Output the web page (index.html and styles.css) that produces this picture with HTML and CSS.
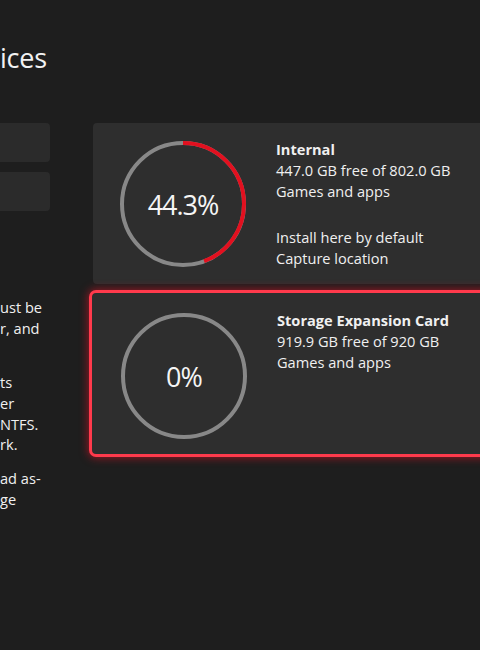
FILE: index.html
```html
<!DOCTYPE html>
<html lang="en">
<head>
<meta charset="utf-8">
<title>Storage devices</title>
<link rel="stylesheet" href="styles.css">
</head>
<body>
<div class="page">
  <h1 class="title">ices</h1>
  <div class="content">
    <aside class="sidebar">
      <div class="side-btn"></div>
      <div class="side-btn"></div>
      <div class="notes">
        <p>ust be<br>r, and<br>&nbsp;</p>
        <p>ts<br>er<br>NTFS.<br>rk.</p>
        <p>ad as-<br>ge</p>
      </div>
    </aside>
    <section class="devices">
      <div class="card">
        <div class="gauge">
          <svg class="ring" viewBox="0 0 126 126" width="126" height="126">
            <circle cx="63" cy="63" r="61" class="track"/>
            <circle cx="63" cy="63" r="61" class="fill" style="stroke-dasharray: 169.8 383.3"/>
          </svg>
          <span class="pct">44.3%</span>
        </div>
        <div class="info">
          <div class="name">Internal</div>
          <div>447.0 GB free of 802.0 GB</div>
          <div>Games and apps</div>
          <div class="extra">
            <div>Install here by default</div>
            <div>Capture location</div>
          </div>
        </div>
      </div>
      <div class="card focused">
        <div class="gauge">
          <svg class="ring" viewBox="0 0 126 126" width="126" height="126">
            <circle cx="63" cy="63" r="61" class="track"/>
          </svg>
          <span class="pct">0%</span>
        </div>
        <div class="info">
          <div class="name">Storage Expansion Card</div>
          <div>919.9 GB free of 920 GB</div>
          <div>Games and apps</div>
        </div>
      </div>
    </section>
  </div>
</div>
</body>
</html>
```

FILE: styles.css
```css
html, body {
  margin: 0;
  padding: 0;
  background: #1e1e1e;
  width: 480px;
  height: 650px;
  overflow: hidden;
}

.page {
  font-family: "Open Sans", "Noto Sans", sans-serif;
  color: #f0f0f0;
  font-size: 14.6px;
}

.title {
  margin: 0;
  padding-top: 40px;
  height: 123px;
  box-sizing: border-box;
  font-size: 27px;
  font-weight: 400;
  line-height: 36px;
  color: #f2f2f2;
  letter-spacing: -0.2px;
}

.content {
  display: grid;
  grid-template-columns: 50px 440px;
  column-gap: 43px;
}

.sidebar {
  display: flex;
  flex-direction: column;
  gap: 10px;
}

.side-btn {
  height: 39px;
  background: #2b2b2b;
  border-radius: 0 4px 4px 0;
}

.notes {
  margin-top: 76px;
  line-height: 20.7px;
  white-space: nowrap;
}

.notes p {
  margin: 0 0 13px 0;
}

.devices {
  display: flex;
  flex-direction: column;
  gap: 9px;
}

.card {
  position: relative;
  height: 161px;
  box-sizing: border-box;
  background: #2e2e2e;
  border-radius: 4px;
  display: flex;
  align-items: flex-start;
  padding: 16px 0 0 27px;
  gap: 30px;
}

.card.focused {
  margin-left: -1px;
  outline: 3px solid #ff3a4c;
  outline-offset: 0;
  box-shadow: 0 0 8px 4px rgba(225, 20, 40, 0.6);
  padding: 17px 0 0 29px;
}

.gauge {
  position: relative;
  width: 126px;
  height: 126px;
  margin-top: 2px;
  display: flex;
  align-items: center;
  justify-content: center;
  flex: none;
}

.focused .gauge {
  margin-top: 3px;
}

.ring {
  position: absolute;
  inset: 0;
  transform: rotate(-90deg);
}

.ring circle {
  fill: none;
  stroke-width: 4;
}

.ring .track {
  stroke: #888888;
}

.ring .fill {
  stroke: #e2101f;
}

.pct {
  position: relative;
  font-size: 27px;
  font-weight: 400;
  letter-spacing: -1px;
  color: #f5f5f5;
  line-height: 1;
}

.info {
  line-height: 21px;
  white-space: nowrap;
}

.name {
  font-weight: 700;
}

.extra {
  margin-top: 25px;
}
```
